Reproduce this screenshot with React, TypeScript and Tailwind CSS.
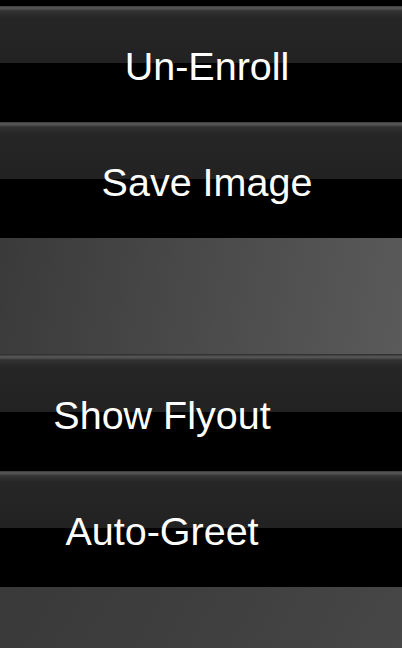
interface MenuButtonProps {
  label: string;
  shift?: "wide" | "narrow";
}

function MenuButton({ label, shift = "wide" }: MenuButtonProps) {
  return (
    <div
      className={`h-[116px] shrink-0 flex items-center justify-center pt-[5px] bg-[linear-gradient(to_bottom,#3a3a3a_0px,#5a5a5a_2px,#323232_5px,#262626_12px,#222222_57px,#000000_57px,#000000_100%)] ${
        shift === "wide" ? "pl-[12px]" : "pr-[78px]"
      }`}
    >
      <span className="text-white text-[39.5px] leading-none font-['Liberation_Sans',Arial,sans-serif]">
        {label}
      </span>
    </div>
  );
}

export default function App() {
  return (
    <div className="w-[402px] h-[648px] overflow-hidden bg-black flex flex-col">
      <div className="h-[6px] shrink-0 bg-black" />
      <MenuButton label="Un-Enroll" />
      <MenuButton label="Save Image" />
      <div className="h-[117px] shrink-0 bg-[linear-gradient(100deg,#3a3a3a_0%,#4a4a4a_50%,#5a5a5a_100%)] border-b border-[#333]" />
      <MenuButton label="Show Flyout" shift="narrow" />
      <MenuButton label="Auto-Greet" shift="narrow" />
      <div className="flex-1 bg-[linear-gradient(120deg,#393939_0%,#3f3f3f_50%,#474747_100%)]" />
    </div>
  );
}
